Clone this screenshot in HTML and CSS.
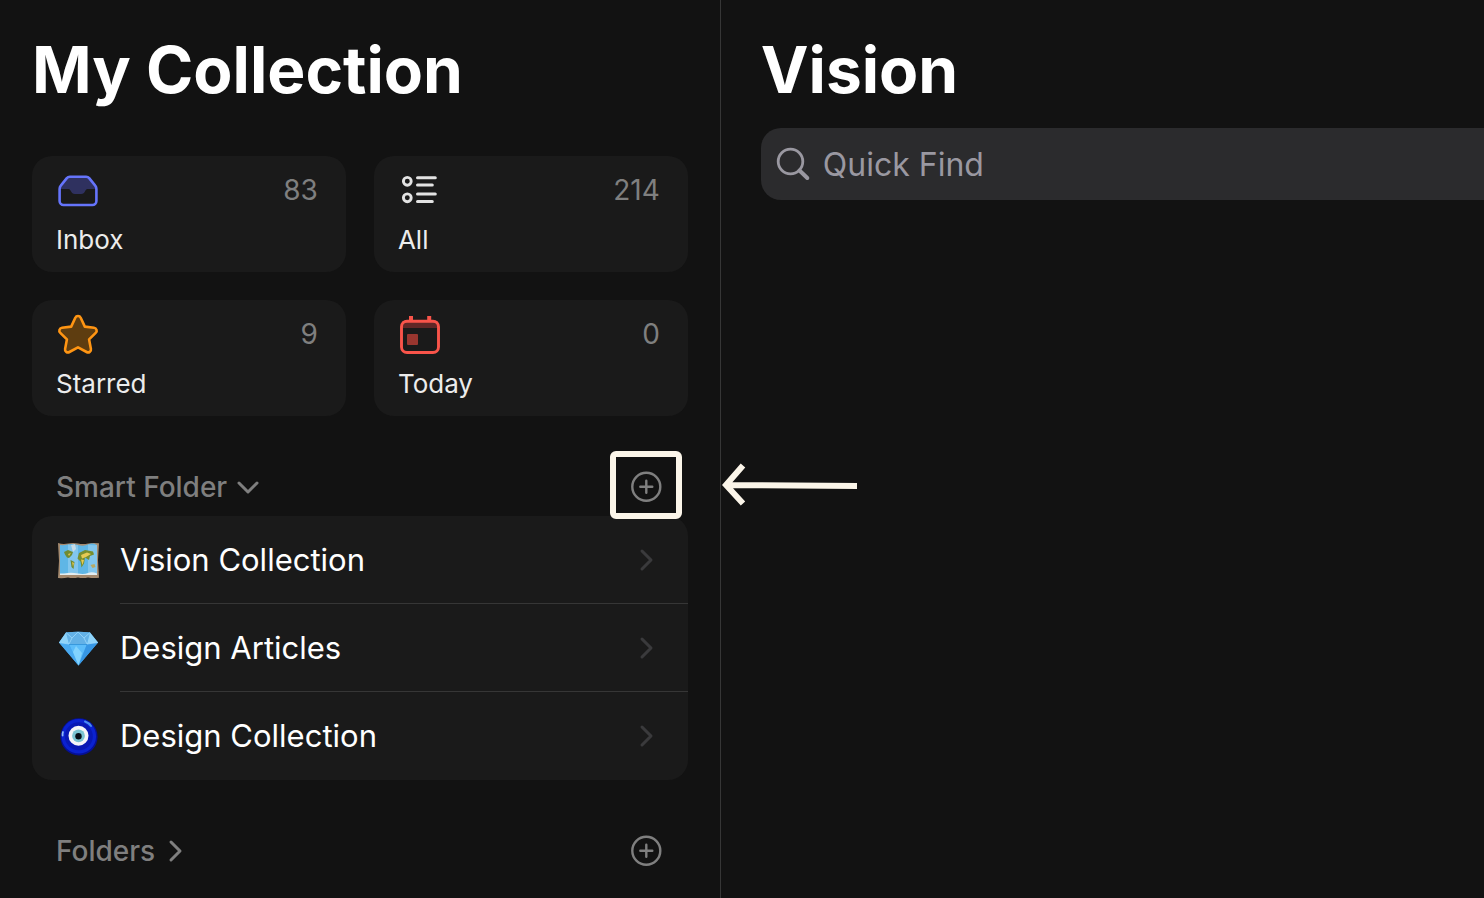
FILE: index.html
```html
<!DOCTYPE html>
<html lang="en">
<head>
<meta charset="utf-8">
<meta name="viewport" content="width=device-width, initial-scale=1">
<title>My Collection</title>
<link rel="stylesheet" href="styles.css">
</head>
<body>
<div class="app">
  <aside class="sidebar">
    <h1 class="title">My Collection</h1>
    <nav class="tiles" aria-label="Collections">
      <a class="tile" href="#inbox">
        <svg class="tile-icon" viewBox="0 0 44 44" aria-hidden="true">
          <path d="M3.500 21 12 9.500h20L40.500 21h-8.500c-1.500 0-2 .6-2.800 2-1 2-2 3-4 3h-6.400c-2 0-3-1-4-3-.8-1.400-1.300-2-2.800-2z" fill="#2f315f"/>
          <path d="M13.800 8.800h16.400a4 4 0 0 1 3 1.400l6 7.400a5 5 0 0 1 1.200 3.300V33a4 4 0 0 1-4 4H7.600a4 4 0 0 1-4-4V20.900a5 5 0 0 1 1.200-3.300l6-7.400a4 4 0 0 1 3-1.400z" fill="none" stroke="#6574fb" stroke-width="2.600"/>
        </svg>
        <span class="tile-count">83</span>
        <span class="tile-name">Inbox</span>
      </a>
      <a class="tile" href="#all">
        <svg class="tile-icon" viewBox="0 0 44 44" aria-hidden="true" fill="none" stroke="#e3e3e3">
          <circle cx="9.300" cy="13.300" r="3.900" stroke-width="2.900"/>
          <circle cx="9.300" cy="29.800" r="3.900" stroke-width="2.900"/>
          <path d="M19.500 9.800H37.300M19.500 17H34.300M19.500 26H37.300M19.500 33.500H34.300" stroke-width="3" stroke-linecap="round"/>
        </svg>
        <span class="tile-count">214</span>
        <span class="tile-name">All</span>
      </a>
      <a class="tile" href="#starred">
        <svg class="tile-icon" viewBox="0 0 44 44" aria-hidden="true">
          <path d="M19.300 5.700c1.100-2.300 4.300-2.300 5.400 0l4.100 8.900 9.200 1.200c2.600.3 3.600 3.400 1.700 5.100l-6.600 6.500 1.800 9.500c.5 2.500-2.100 4.300-4.300 3.100L22 35.300l-8.600 4.700c-2.200 1.200-4.800-.6-4.300-3.100l1.800-9.500-6.600-6.500c-1.900-1.700-.9-4.800 1.700-5.100l9.200-1.200z" fill="#5e3d10" stroke="#ff9513" stroke-width="2.600" stroke-linejoin="round"/>
        </svg>
        <span class="tile-count">9</span>
        <span class="tile-name">Starred</span>
      </a>
      <a class="tile" href="#today">
        <svg class="tile-icon" viewBox="0 0 44 44" aria-hidden="true">
          <path d="M4 9h36v7H4z" fill="#612726"/>
          <rect x="9" y="22" width="11" height="11" rx="1" fill="#99362f"/>
          <path d="M13 4v4.500M31.200 4v4.500" stroke="#f9544a" stroke-width="4"/>
          <rect x="3.500" y="9.200" width="37" height="31.300" rx="5.500" fill="none" stroke="#f9544a" stroke-width="2.900"/>
        </svg>
        <span class="tile-count">0</span>
        <span class="tile-name">Today</span>
      </a>
    </nav>

    <section>
      <div class="section-head">
        <button class="section-toggle" type="button" aria-expanded="true">
          <span>Smart Folder</span>
          <svg class="chevron" viewBox="0 0 24 24" aria-hidden="true"><path d="M3 8l9 9 9-9"/></svg>
        </button>
        <button class="add" type="button" aria-label="Add smart folder">
          <svg class="add-icon" viewBox="0 0 32 32" aria-hidden="true"><circle cx="16.300" cy="15.800" r="14"/><path d="M16.300 9.800v12M10.300 15.800h12"/></svg>
          <span class="callout"></span>
          <svg class="callout-arrow" viewBox="0 0 136 44" aria-hidden="true"><path d="M21 2.500 4 22l17 18.500M6 22l129 1"/></svg>
        </button>
      </div>
      <ul class="folders">
        <li><a class="folder" href="#vision">
          <svg class="emoji" viewBox="0 0 44 44" aria-hidden="true">
            <path d="M2 5q5 1.500 10 .5t10 0 10 0 11-.2l-1 17 1 17.500q-6 .6-11-.3-5 1-10 0-5 1-10 0-5 1-10 .5l1-17z" fill="#a58b70"/>
            <path d="M4 7q4 .5 8-.5t10 .5 10-.5 9 .5v29.500q-4 .8-9 0-5 1-10 0-5 1-10 0-4 .6-8 .6z" fill="#5fb6e6"/>
            <path d="M12 6.500q5 1 10 .5v29.500q-5 .7-10 0zM32 6.500q5 1 9 .5v29.500q-5 .4-9 0z" fill="#8bcbef" opacity=".8"/>
            <path d="M15 7l4-1 1 5-3 3z" fill="#c7dbe6"/>
            <path d="M8 14l4-2 5 2-1 3-3 3-2-.5-2-3zM14.500 22l4 2-1 7-2-2z" fill="#6f8b32"/>
            <path d="M12 16l3-1-2 3zM16 24l2 1-1 4z" fill="#e0c34e"/>
            <path d="M23 15l6-3 8 1.500 1 3-4 1.500-1 4-4-2.500-1 6-2.500 4-1-6-3-3z" fill="#778e2f"/>
            <path d="M25 17l6-2.500 4 1.500-5 3-4 1.500zM25 21.500l3 .5-1.500 5z" fill="#e7ca54"/>
            <path d="M34.500 27l4-1 1 3-3 1z" fill="#b9a962"/>
            <path d="M4 35.500q4 0 8-.5t10 .5 10-.5 9 .5v1.500H4z" fill="#e3edf0"/>
          </svg>
          <span class="folder-name">Vision Collection</span>
          <svg class="chevron chevron-dim" viewBox="0 0 24 24" aria-hidden="true"><path d="M7 3l9 9-9 9"/></svg>
        </a></li>
        <li><a class="folder" href="#articles">
          <svg class="emoji" viewBox="0 0 44 44" aria-hidden="true">
            <path d="M10 6.500Q22 4.800 34 6.500L42 16.500 22.500 39.500 3 16.500z" fill="#45a9ee"/>
            <path d="M10 6.500Q22 4.800 34 6.500L31 18H13z" fill="#63b1e6"/>
            <path d="M10 6.500 3 16.500 13 18zM34 6.500 42 16.500 31 18z" fill="#8fd3f9"/>
            <path d="M13 18l9.500 21.500L31 18z" fill="#5cbdfa"/>
            <path d="M3 16.500 13 18l9.500 21.500z" fill="#4aaaf0"/>
            <path d="M22.500 39.500 31 18l11-1.500z" fill="#3797e4"/>
            <path d="M20 20l-3 6 5.500 13.500L26 27z" fill="#82d3fe"/>
            <path d="M10 6.500 16 12l6-6 6 6 6-5.500M3 16.500 13 18l3-6M42 16.500 31 18l-3-6" fill="none" stroke="#a5defe" stroke-width=".7"/>
            <path d="M13 18.500h18" stroke="#2f8fd6" stroke-width=".8"/>
          </svg>
          <span class="folder-name">Design Articles</span>
          <svg class="chevron chevron-dim" viewBox="0 0 24 24" aria-hidden="true"><path d="M7 3l9 9-9 9"/></svg>
        </a></li>
        <li><a class="folder" href="#design">
          <svg class="emoji" viewBox="0 0 44 44" aria-hidden="true">
            <circle cx="23" cy="22.800" r="18.600" fill="#050f95"/>
            <circle cx="22.800" cy="22.300" r="17.300" fill="#0b22d0"/>
            <circle cx="22.800" cy="22.300" r="14" fill="#0818b4"/>
            <path d="M29 7.500q4 1.500 6 4.500" fill="none" stroke="#4a8cf1" stroke-width="2" stroke-linecap="round"/>
            <path d="M7 18q-.6 1.500-.4 3.500" fill="none" stroke="#8eb7fa" stroke-width="1.800" stroke-linecap="round"/>
            <circle cx="22.500" cy="21.800" r="10" fill="#f5f5f8"/>
            <circle cx="22.500" cy="21.800" r="6.400" fill="#7bc3d2"/>
            <circle cx="22.500" cy="22.300" r="3.200" fill="#070d16"/>
          </svg>
          <span class="folder-name">Design Collection</span>
          <svg class="chevron chevron-dim" viewBox="0 0 24 24" aria-hidden="true"><path d="M7 3l9 9-9 9"/></svg>
        </a></li>
      </ul>
    </section>

    <section>
      <div class="section-head">
        <button class="section-toggle" type="button" aria-expanded="false">
          <span>Folders</span>
          <svg class="chevron" viewBox="0 0 24 24" aria-hidden="true"><path d="M7 3l9 9-9 9"/></svg>
        </button>
        <button class="add" type="button" aria-label="Add folder">
          <svg class="add-icon" viewBox="0 0 32 32" aria-hidden="true"><circle cx="16.300" cy="15.800" r="14"/><path d="M16.300 9.800v12M10.300 15.800h12"/></svg>
        </button>
      </div>
    </section>
  </aside>

  <main class="detail">
    <h2 class="title">Vision</h2>
    <label class="search">
      <svg class="search-icon" viewBox="0 0 36 36" aria-hidden="true"><circle cx="15.500" cy="15.500" r="12.300" stroke-width="2.800"/><path d="M24.500 24.500 32.300 32" stroke-width="4"/></svg>
      <input class="search-input" type="search" placeholder="Quick Find" aria-label="Quick Find">
    </label>
  </main>
</div>
</body>
</html>
```
FILE: styles.css
```css
* {
  box-sizing: border-box;
}

body {
  margin: 0;
  background: #121212;
  color: #ffffff;
  font-family: Inter, "Liberation Sans", sans-serif;
}

a {
  color: inherit;
  text-decoration: none;
}

button {
  padding: 0;
  border: 0;
  background: none;
  color: inherit;
  font: inherit;
}

.app {
  display: grid;
  grid-template-columns: 17fr 18fr;
  min-height: 100vh;
}

.sidebar {
  padding: 30px 32px 0;
  border-right: 1px solid #363636;
}

.title {
  margin: 0;
  font-size: 64px;
  font-weight: 700;
  line-height: 80px;
}

.tiles {
  display: grid;
  grid-template-columns: 1fr 1fr;
  gap: 28px;
  margin-top: 46px;
}

.tile {
  display: grid;
  grid-template-columns: 1fr auto;
  align-content: start;
  row-gap: 10px;
  padding: 12px 28px 14px 24px;
  min-height: 116px;
  border-radius: 20px;
  background: #1a1a1a;
}

.tile-icon {
  width: 44px;
  height: 44px;
}

.tile-count {
  color: #7f7f7f;
  font-size: 28px;
  line-height: 44px;
}

.tile-name {
  grid-column: 1 / -1;
  color: #ececec;
  font-size: 26px;
  line-height: 36px;
}

.section-head {
  display: flex;
  align-items: center;
  justify-content: space-between;
  height: 58px;
  margin-top: 42px;
  padding: 0 26px 0 24px;
  color: #7f7f7f;
}

.section-toggle {
  display: flex;
  align-items: center;
  gap: 9px;
  font-size: 28px;
  font-weight: 500;
  line-height: 36px;
}

.chevron {
  width: 24px;
  height: 24px;
  fill: none;
  stroke: currentColor;
  stroke-width: 3;
  stroke-linecap: round;
  stroke-linejoin: round;
}

.chevron-dim {
  color: #3a3a3c;
}

.add {
  position: relative;
  width: 32px;
  height: 32px;
}

.add-icon {
  display: block;
  width: 32px;
  height: 32px;
  fill: none;
  stroke: currentColor;
  stroke-width: 2.4;
  stroke-linecap: round;
}

.callout {
  position: absolute;
  top: -20px;
  left: -20px;
  width: 72px;
  height: 68px;
  border: 6px solid #fbf5e9;
  border-radius: 6px;
}

.callout-arrow {
  position: absolute;
  top: -8px;
  left: 92px;
  width: 136px;
  height: 44px;
  fill: none;
  stroke: #fbf5e9;
  stroke-width: 6;
}

.folders {
  margin: 0;
  padding: 0;
  border-radius: 20px;
  background: #1a1a1a;
  list-style: none;
}

.folder {
  display: grid;
  grid-template-columns: 44px 1fr;
  align-items: center;
  column-gap: 20px;
  position: relative;
  padding-left: 24px;
}

.folder-name {
  padding: 22px 0 21px;
  border-bottom: 1px solid #363636;
  font-size: 31px;
  line-height: 44px;
}

li:last-child .folder-name {
  border-bottom-color: transparent;
}

.folder .chevron {
  position: absolute;
  top: 32px;
  right: 29px;
}

.emoji {
  width: 44px;
  height: 44px;
}

.detail {
  padding: 30px 0 0 40px;
}

.search {
  display: flex;
  align-items: center;
  gap: 12px;
  height: 72px;
  margin-top: 18px;
  padding-left: 14px;
  border-radius: 20px 0 0 20px;
  background: #2b2b2d;
  color: #9a98a1;
}

.search-icon {
  flex: none;
  width: 36px;
  height: 36px;
  fill: none;
  stroke: currentColor;
  stroke-linecap: round;
}

.search-input {
  flex: 1;
  min-width: 0;
  padding: 0;
  border: 0;
  outline: 0;
  background: none;
  color: #ffffff;
  font: inherit;
  font-size: 32px;
}

.search-input::placeholder {
  color: #9a98a1;
}
```
